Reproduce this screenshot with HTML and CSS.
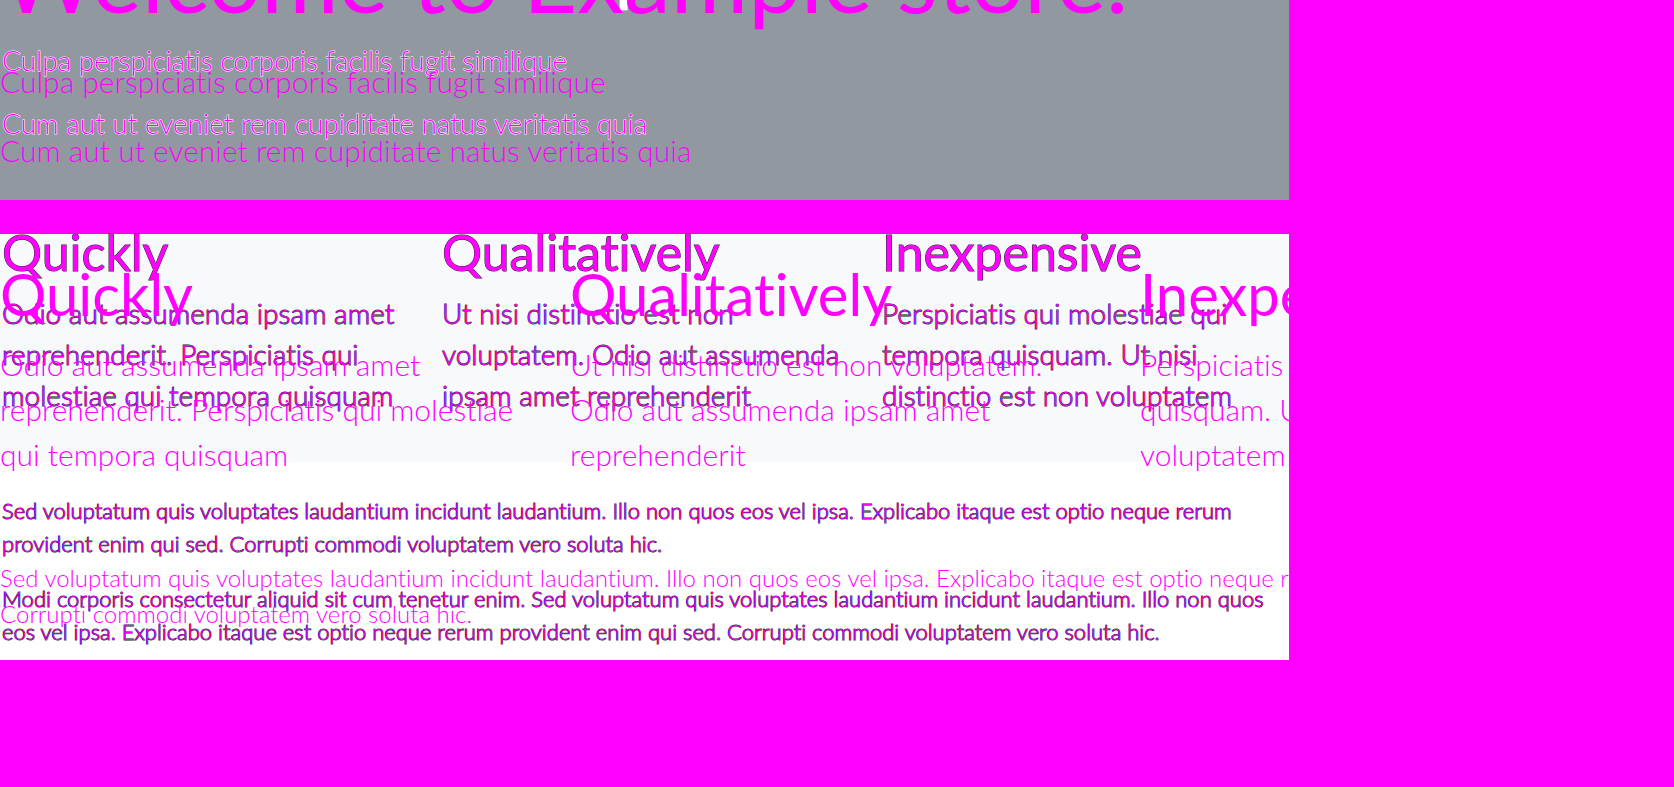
FILE: index.html
```html
<!DOCTYPE html>
<html lang="en">
<head>
<meta charset="utf-8">
<title>Example store</title>
<link rel="stylesheet" href="styles.css">
</head>
<body>
<main class="page">
  <div class="layer base">
    <header class="hero">
      <h1 class="title">Welcome to Example store.</h1>
      <p class="lead">Culpa perspiciatis corporis facilis fugit similique</p>
      <p class="lead">Cum aut ut eveniet rem cupiditate natus veritatis quia</p>
    </header>
    <section class="features">
      <article><h2 class="name">Quickly</h2><p class="desc">Odio aut assumenda ipsam amet<br>reprehenderit. Perspiciatis qui<br>molestiae qui tempora quisquam</p></article>
      <article><h2 class="name">Qualitatively</h2><p class="desc">Ut nisi distinctio est non<br>voluptatem. Odio aut assumenda<br>ipsam amet reprehenderit</p></article>
      <article><h2 class="name">Inexpensive</h2><p class="desc">Perspiciatis qui molestiae qui<br>tempora quisquam. Ut nisi<br>distinctio est non voluptatem</p></article>
    </section>
    <section class="body">
      <p class="copy">Sed voluptatum quis voluptates laudantium incidunt laudantium. Illo non quos eos vel ipsa. Explicabo itaque est optio neque rerum<br>provident enim qui sed. Corrupti commodi voluptatem vero soluta hic.</p>
      <p class="copy">Modi corporis consectetur aliquid sit cum tenetur enim. Sed voluptatum quis voluptates laudantium incidunt laudantium. Illo non quos<br>eos vel ipsa. Explicabo itaque est optio neque rerum provident enim qui sed. Corrupti commodi voluptatem vero soluta hic.</p>
    </section>
  </div>
  <div class="layer over">
    <header class="hero">
      <h1 class="title">Welcome to Example store.</h1>
      <p class="lead">Culpa perspiciatis corporis facilis fugit similique</p>
      <p class="lead">Cum aut ut eveniet rem cupiditate natus veritatis quia</p>
    </header>
    <section class="features">
      <article><h2 class="name">Quickly</h2><p class="desc">Odio aut assumenda ipsam amet<br>reprehenderit. Perspiciatis qui molestiae<br>qui tempora quisquam</p></article>
      <article><h2 class="name">Qualitatively</h2><p class="desc">Ut nisi distinctio est non voluptatem.<br>Odio aut assumenda ipsam amet<br>reprehenderit</p></article>
      <article><h2 class="name">Inexpensive</h2><p class="desc">Perspiciatis qui molestiae qui tempora<br>quisquam. Ut nisi distinctio est non<br>voluptatem</p></article>
    </section>
    <section class="body">
      <p class="copy">Sed voluptatum quis voluptates laudantium incidunt laudantium. Illo non quos eos vel ipsa. Explicabo itaque est optio neque rerum<br>Corrupti commodi voluptatem vero soluta hic.</p>
    </section>
  </div>
</main>
</body>
</html>
```
FILE: styles.css
```css
* { box-sizing: border-box; }
body {
  margin: 0;
  background: #ff00ff;
  color: #ff00ff;
  font-family: Lato, "Open Sans", sans-serif;
  font-variant-ligatures: none;
  overflow: hidden;
}
h1, h2, p { margin: 0; font-weight: 400; white-space: nowrap; }
.page { position: relative; width: 77%; overflow: hidden; }
.layer { paint-order: stroke fill; }
.lead, .desc, .copy { font-weight: 300; }

/* Outlined layer */
.base .hero {
  overflow: hidden;
  background: #91989f;
  padding: 0 0 52px 2px;
  -webkit-text-stroke: 1px #ffffff;
}
.base .title { margin-top: -82px; margin-bottom: 20px; font-size: 77px; line-height: 97px; color: #ffffff; }
.base .lead { font-size: 28px; line-height: 50px; margin-bottom: 13px; }
.base .lead:last-child { margin-bottom: 0; }
.base .features {
  display: grid;
  grid-template-columns: 440px 440px 1fr;
  margin-top: 34px;
  padding-left: 2px;
  padding-bottom: 46px;
  background: #f8f9fb;
  -webkit-text-stroke: 1px #202428;
}
.base .name { font-size: 50px; line-height: 36px; margin-bottom: 23px; }
.base .desc { font-size: 28px; line-height: 41px; }
.base .body {
  padding: 32px 0 12px 2px;
  background: #ffffff;
  -webkit-text-stroke: 1px #202428;
}
.base .copy { font-size: 22px; line-height: 33px; margin-bottom: 22px; }
.base .copy:last-child { margin-bottom: 0; }

/* Larger solid layer drawn over the first */
.over { position: absolute; inset: 0; }
.over .title { margin-top: -81px; margin-bottom: 24px; font-size: 94px; line-height: 116px; }
.over .lead { font-size: 30px; line-height: 45px; margin-bottom: 24px; }
.over .features { display: grid; grid-template-columns: repeat(3, 570px); margin-top: 86px; }
.over .name { font-size: 58px; line-height: 70px; margin-bottom: 13px; }
.over .desc { font-size: 30px; line-height: 45px; }
.over .body { padding-top: 83px; }
.over .copy { font-size: 24px; line-height: 36px; }
```
